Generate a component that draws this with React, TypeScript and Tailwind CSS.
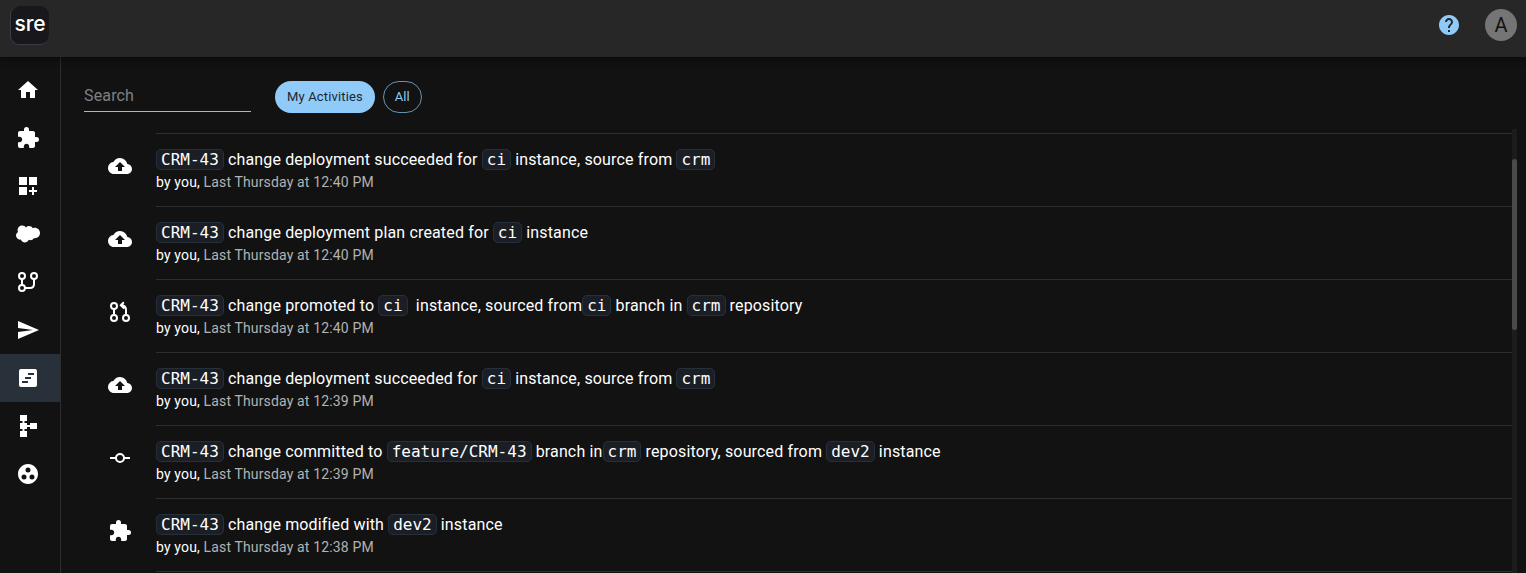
import React from "react";
import {
  MdHome, MdExtension, MdDashboardCustomize, MdSend, MdViewTimeline, MdSchema,
  MdGroupWork, MdBackup, MdHelp,
} from "react-icons/md";

function Salesforce() {
  return (
    <svg viewBox="0 0 24 24" width="24" height="24" fill="currentColor">
      <path d="M10.006 5.415a4.195 4.195 0 013.045-1.306c1.56 0 2.954.9 3.69 2.205.63-.3 1.35-.45 2.1-.45 2.85 0 5.159 2.34 5.159 5.22s-2.31 5.22-5.176 5.22c-.345 0-.69-.044-1.02-.104a3.75 3.75 0 01-3.3 1.95c-.6 0-1.155-.15-1.65-.375A4.314 4.314 0 018.88 20.4a4.302 4.302 0 01-4.05-2.82c-.27.062-.54.076-.825.076-2.204 0-4.005-1.8-4.005-4.05 0-1.5.811-2.805 2.01-3.51-.255-.57-.39-1.2-.39-1.846 0-2.58 2.1-4.65 4.65-4.65 1.53 0 2.85.705 3.72 1.8" />
    </svg>
  );
}

function Branch() {
  return (
    <svg viewBox="0 0 24 24" width="24" height="24" fill="none" stroke="currentColor" strokeWidth="2">
      <circle cx="6" cy="6" r="3" />
      <circle cx="18" cy="6" r="3" />
      <circle cx="6" cy="18" r="3" />
      <path d="M6 9v6M9 18h5c3 0 4-2 4-4V9" />
    </svg>
  );
}

function PullRequest() {
  return (
    <svg viewBox="0 0 24 24" width="24" height="24" fill="none" stroke="currentColor" strokeWidth="2">
      <circle cx="6" cy="6" r="3" />
      <circle cx="6" cy="18" r="3" />
      <circle cx="18" cy="18" r="3" />
      <path d="M6 9v6M18 15v-5c0-3.200-1.600-4.800-5-4.800M15.800 2.200l-3 3 3.400 3.400" />
    </svg>
  );
}

function Commit() {
  return (
    <svg viewBox="0 0 24 24" width="24" height="24" fill="none" stroke="currentColor" strokeWidth="2">
      <circle cx="12" cy="12" r="4" />
      <path d="M2 12h6M16 12h6" />
    </svg>
  );
}

function Code({ children }: { children: React.ReactNode }) {
  return (
    <code className="rounded-[5px] border border-[#25303b] bg-[#1b1f25] px-1 font-['DejaVu_Sans_Mono',monospace] text-base tracking-normal">
      {children}
    </code>
  );
}

const nav = [
  { name: "home", icon: <MdHome size={24} /> },
  { name: "extension", icon: <MdExtension size={24} /> },
  { name: "dashboard", icon: <MdDashboardCustomize size={24} /> },
  { name: "salesforce", icon: <Salesforce /> },
  { name: "branches", icon: <Branch /> },
  { name: "send", icon: <MdSend size={24} /> },
  { name: "activity", icon: <MdViewTimeline size={24} />, active: true },
  { name: "schema", icon: <MdSchema size={24} /> },
  { name: "groups", icon: <MdGroupWork size={24} /> },
];

const activities = [
  {
    icon: <MdBackup size={24} />,
    time: "12:40 PM",
    text: <> change deployment succeeded for <Code>ci</Code> instance, source from <Code>crm</Code></>,
  },
  {
    icon: <MdBackup size={24} />,
    time: "12:40 PM",
    text: <> change deployment plan created for <Code>ci</Code> instance</>,
  },
  {
    icon: <PullRequest />,
    time: "12:40 PM",
    text: <> change promoted to <Code>ci</Code>{" \u00a0"}instance, sourced from<Code>ci</Code> branch in <Code>crm</Code> repository</>,
  },
  {
    icon: <MdBackup size={24} />,
    time: "12:39 PM",
    text: <> change deployment succeeded for <Code>ci</Code> instance, source from <Code>crm</Code></>,
  },
  {
    icon: <Commit />,
    time: "12:39 PM",
    text: <> change committed to <Code>feature/CRM-43</Code> branch in<Code>crm</Code> repository, sourced from <Code>dev2</Code> instance</>,
  },
  {
    icon: <MdExtension size={24} />,
    time: "12:38 PM",
    text: <> change modified with <Code>dev2</Code> instance</>,
  },
];

export default function App() {
  return (
    <div className="flex h-[573px] flex-col overflow-hidden bg-[#121212] font-[Roboto,sans-serif] text-white">
      <header className="z-10 flex h-[57px] shrink-0 items-start justify-between bg-[#272727] pr-[9px] pl-2.5 shadow-[0_2px_4px_-1px_rgba(0,0,0,0.2),0_4px_5px_rgba(0,0,0,0.14),0_1px_10px_rgba(0,0,0,0.12)]">
        <div className="mt-1.5 flex h-[39px] w-[39px] justify-center rounded-[9px] border-b border-l border-[#3d3b49] bg-[#17171c] font-[Inter,sans-serif] text-[21px] leading-[35px] font-medium tracking-[-0.2px]">
          sre
        </div>
        <div className="mt-[9px] flex items-center gap-6">
          <MdHelp size={24} className="text-[#90caf9]" />
          <div className="flex h-8 w-8 items-center justify-center rounded-full bg-[#757575] text-xl text-[#121212]">A</div>
        </div>
      </header>
      <div className="flex min-h-0 flex-1">
        <nav className="w-[61px] shrink-0 border-r border-[#2e2e2e] pt-[9px]">
          {nav.map((n) => (
            <div key={n.name} className={n.active ? "flex h-12 items-center bg-[#28313a] pl-4" : "flex h-12 items-center pl-4"}>
              {n.icon}
            </div>
          ))}
        </nav>
        <main className="flex min-w-0 flex-1 flex-col">
          <div className="flex h-[72px] shrink-0 pt-6 pl-[23px]">
            <div className="h-[31px] w-[167px] border-b border-[#b5b5b5] text-base leading-[29px] tracking-[0.15px] text-[#808080]">Search</div>
            <div className="ml-6 flex h-8 items-center rounded-full bg-[#90caf9] px-3 text-[13px] tracking-[0.15px] text-[#1c2730]">My Activities</div>
            <div className="ml-2 flex h-8 items-center rounded-full border border-[#6792b2] px-[11px] text-[13px] text-[#90caf9]">All</div>
          </div>
          <div className="flex min-h-0 flex-1 pr-[9px]">
            <div className="min-w-0 flex-1 overflow-hidden pt-1 pl-[47px]">
              {activities.map((a, i) => (
                <div key={i} className="flex h-[73px]">
                  <div className="w-12 shrink-0 pt-[21px]">{a.icon}</div>
                  <div className="flex-1 border-t border-[#2e2e2e] pt-3.5 whitespace-nowrap">
                    <div className="h-6 text-base leading-6 tracking-[0.15px]">
                      <Code>CRM-43</Code>{a.text}
                    </div>
                    <div className="h-5 text-sm leading-5 tracking-[0.15px] text-[#b3b3b3]">
                      <span className="text-white">by you,</span> Last Thursday at {a.time}
                    </div>
                  </div>
                </div>
              ))}
              <div className="ml-12 h-px bg-[#2e2e2e]" />
            </div>
            <div className="w-[5px] shrink-0 bg-[#1c1c1c] pt-[30px]">
              <div className="h-[171px] rounded-full bg-[#4a4a4a]" />
            </div>
          </div>
        </main>
      </div>
    </div>
  );
}
